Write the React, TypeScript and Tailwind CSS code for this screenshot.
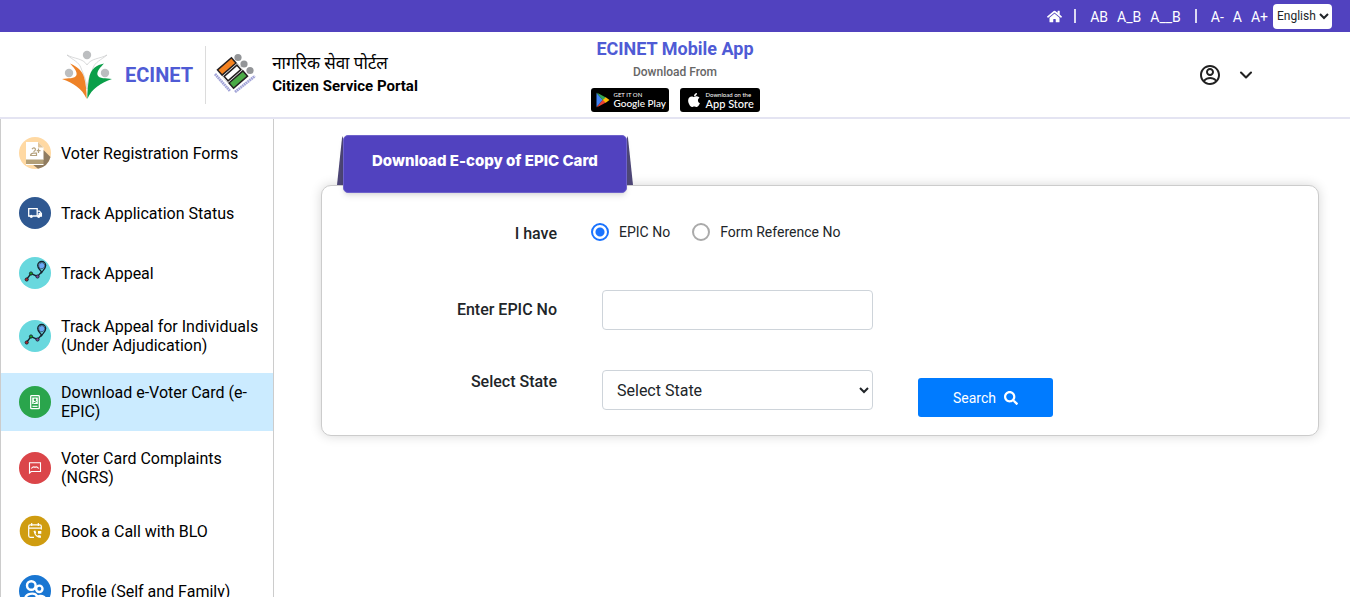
import React, { useState } from "react";
import { FaApple, FaHome, FaSearch } from "react-icons/fa";
import { RiAccountCircleLine } from "react-icons/ri";
import { ChevronDown } from "lucide-react";

function EcinetLogo() {
  return (
    <svg width="52" height="52" viewBox="0 0 52 52" aria-hidden="true">
      <circle cx="26" cy="6" r="4.200" fill="#bcbec0" />
      <circle cx="8" cy="24" r="4.200" fill="#bcbec0" />
      <circle cx="44" cy="24" r="4.200" fill="#bcbec0" />
      <path
        d="M6 6C13 10 22 9 26 16C30 9 39 10 46 6C40 11 34 13 32 19C30 25 27 29 26 40C25 29 22 25 20 19C18 13 12 11 6 6Z"
        fill="#fff"
        stroke="#c9cacc"
        strokeWidth="0.7"
      />
      <path d="M1 30C7 29 14 30 15.500 26C16.500 22 12 18 9 14.500C17 18 21 22 23 28C25 35 25.600 42 25.700 50C21 39 12 34 1 30Z" fill="#ee8227" />
      <path d="M51 30C45 29 38 30 36.500 26C35.500 22 40 18 43 14.500C36 16 29.500 19 28 30C26.800 37 26.300 43 26.300 50C31 39 40 34 51 30Z" fill="#0a9f49" />
    </svg>
  );
}

function VoterLogo() {
  return (
    <svg width="44" height="44" viewBox="0 0 44 44" aria-hidden="true">
      <g fill="#939598">
        <circle cx="25" cy="4.500" r="3.600" />
        <circle cx="31" cy="11" r="3.600" />
        <circle cx="37" cy="17.500" r="3.600" />
      </g>
      <g transform="translate(19.500 20) rotate(-41)">
        <rect x="-10" y="-13" width="20" height="26" fill="#231f20" />
        <rect x="-8.500" y="-11.500" width="17" height="5.500" fill="#f58220" />
        <rect x="-10" y="-4.500" width="20" height="9" fill="#fff" />
        <rect x="-8.500" y="-3" width="17" height="6" fill="#fff" stroke="#231f20" strokeWidth="1.500" />
        <rect x="-8.500" y="6" width="17" height="5.500" fill="#4aaa46" />
      </g>
      <g fill="none" stroke="#a3a5d8" strokeWidth="2.800" strokeDasharray="1.800 0.500">
        <path d="M2 21L17 38" />
        <path d="M22 39L42 23" />
      </g>
    </svg>
  );
}

function PlayLogo() {
  return (
    <svg width="14" height="16" viewBox="0 0 13 16" aria-hidden="true" className="shrink-0">
      <path d="M0 1L6.500 8L0 15Z" fill="#4285f4" />
      <path d="M0 0.500L9.500 5.500L6.500 8.500Z" fill="#34a853" />
      <path d="M0 15.500L9.500 10.500L6.500 7.500Z" fill="#ea4335" />
      <path d="M9.200 5.200L13 8L9.200 10.800L6.300 8Z" fill="#fbbc04" />
    </svg>
  );
}

function FormsIcon() {
  return (
    <svg width="32" height="32" viewBox="0 0 32 32" aria-hidden="true">
      <circle cx="16" cy="16" r="16" fill="#ffd9a3" />
      <path d="M24.500 13L31.500 20A16 16 0 0 1 19 31.700L13 27Z" fill="#8f7b60" />
      <path d="M7 5H19L24.500 10.500V23H7Z" fill="#fff" />
      <path d="M19 5L24.500 10.500H19Z" fill="#e0c59c" />
      <path d="M7 22.500H24.500V27.500H7Z" fill="#b39f77" />
      <path d="M7 27H24.500V28H7Z" fill="#fff" />
      <g fill="none" stroke="#b5a27e" strokeWidth="1.200">
        <path d="M13 12.200Q14.800 9.800 16.500 12Q16.500 14 14.500 14.800M11.500 18.500Q12 16.200 14.500 16.200H17.500V18.500H11M19.500 11.500V16M17.700 13.700H21.500" />
      </g>
    </svg>
  );
}

function TruckIcon() {
  return (
    <svg width="32" height="32" viewBox="0 0 32 32" aria-hidden="true">
      <circle cx="16" cy="16" r="16" fill="#2f5891" />
      <path
        d="M11 19H9.700V11.600H18.200V19H13.500M18.200 14.200H20.500L22.400 16.500V19H21"
        fill="none"
        stroke="#fff"
        strokeWidth="1.300"
      />
      <path d="M19.500 16H21.500L22.400 17.500V19H19.500Z" fill="#fff" />
      <circle cx="12.300" cy="19.300" r="1.600" fill="#fff" />
      <circle cx="19.700" cy="19.300" r="1.600" fill="#fff" />
    </svg>
  );
}

function RouteIcon() {
  return (
    <svg width="32" height="32" viewBox="0 0 32 32" aria-hidden="true">
      <circle cx="16" cy="16" r="16" fill="#68d8de" />
      <path d="M7.500 22.500L12 16.500L18.500 19.500L23 14.500" fill="none" stroke="#16222e" strokeWidth="1.400" />
      <path
        d="M22.700 15.500C21.500 12.500 18.700 11.500 18.700 8.500A4 4 0 0 1 26.700 8.500C26.700 11.500 24 13 22.700 15.500Z"
        fill="#68d8de"
        stroke="#16222e"
        strokeWidth="1.300"
      />
      <circle cx="22.700" cy="8.700" r="3" fill="#6aa9f5" stroke="#223" strokeWidth="0.900" strokeDasharray="1 0.500" />
      <circle cx="7.700" cy="22.500" r="1.600" fill="#b3262d" stroke="#16222e" strokeWidth="0.900" />
      <circle cx="12" cy="16.500" r="1.600" fill="#16a01d" stroke="#16222e" strokeWidth="0.900" />
      <circle cx="18.500" cy="19.500" r="1.600" fill="#7a4a9c" stroke="#16222e" strokeWidth="0.900" />
    </svg>
  );
}

function CardIcon() {
  return (
    <svg width="32" height="32" viewBox="0 0 32 32" aria-hidden="true">
      <circle cx="16" cy="16" r="16" fill="#2aa54c" />
      <rect x="11.700" y="9.700" width="8.600" height="13" rx="0.800" fill="none" stroke="#fff" strokeWidth="1.300" />
      <path d="M13.200 11.500H18.800V18H13.200Z" fill="#fff" />
      <circle cx="16" cy="13.700" r="1.200" fill="#2aa54c" />
      <path d="M14.300 17L17.700 15.500" stroke="#2aa54c" strokeWidth="1" />
      <path d="M13.500 20.300H18.500" stroke="#fff" strokeWidth="1.200" />
    </svg>
  );
}

function ComplaintIcon() {
  return (
    <svg width="32" height="32" viewBox="0 0 32 32" aria-hidden="true">
      <circle cx="16" cy="16" r="16" fill="#db4549" />
      <path d="M10.500 21V10.700H21.500V19.500H12.200Z" fill="none" stroke="#fff" strokeWidth="1.100" />
      <path d="M12.300 16.500C13.500 15 15 14.500 16 15.300C17 14.500 18.500 15 19.700 16.500" fill="none" stroke="#fff" strokeWidth="1.100" />
    </svg>
  );
}

function CallIcon() {
  return (
    <svg width="32" height="32" viewBox="0 0 32 32" aria-hidden="true">
      <circle cx="16" cy="16" r="15.300" fill="#cf9c10" />
      <path
        d="M15 22.300H11.200Q9.700 22.300 9.700 20.800V11.300Q9.700 9.800 11.200 9.800H20.800Q22.300 9.800 22.300 11.300V14.500M9.700 13.200H22.300M12.700 8V11M19.300 8V11"
        fill="none"
        stroke="#fff"
        strokeWidth="1.200"
      />
      <path d="M14.500 16L16.300 15.600L17.200 17.800L16.500 18.700Q17.300 20 18.700 20.700L19.800 20L22 20.800L21.700 23Q16 23 14.500 16Z" fill="#fff" />
      <rect x="19" y="16" width="3.300" height="2.800" fill="#fff" />
    </svg>
  );
}

function ProfileIcon() {
  return (
    <svg width="32" height="32" viewBox="0 0 32 32" aria-hidden="true">
      <circle cx="16" cy="16" r="16" fill="#1976d2" />
      <g fill="none" stroke="#fff" strokeWidth="2.400">
        <circle cx="12.300" cy="10.500" r="4.300" />
        <circle cx="20.300" cy="13.800" r="3.200" />
        <path d="M6 25C6 17.500 16 17.500 18 21M15.500 26C16 20 26 19 26.500 25" />
      </g>
    </svg>
  );
}

const MENU = [
  { label: "Voter Registration Forms", icon: <FormsIcon /> },
  { label: "Track Application Status", icon: <TruckIcon /> },
  { label: "Track Appeal", icon: <RouteIcon /> },
  { label: "Track Appeal for Individuals (Under Adjudication)", icon: <RouteIcon /> },
  { label: "Download e-Voter Card (e-EPIC)", icon: <CardIcon />, active: true },
  { label: "Voter Card Complaints (NGRS)", icon: <ComplaintIcon /> },
  { label: "Book a Call with BLO", icon: <CallIcon /> },
  { label: "Profile (Self and Family)", icon: <ProfileIcon /> },
];

function TopBar() {
  return (
    <div className="flex h-8 shrink-0 items-center justify-end bg-[#5142bf] pr-[18px] text-sm text-white">
      <a href="#home" aria-label="Home">
        <FaHome size={15} />
      </a>
      <span className="ml-3 h-3.5 w-0.5 bg-white/80" />
      <div className="ml-3.5 flex gap-[9px] pt-0.5">
        <button type="button">AB</button>
        <button type="button">A_B</button>
        <button type="button">A__B</button>
      </div>
      <span className="ml-3.5 h-3.5 w-0.5 bg-white/80" />
      <div className="ml-3.5 flex gap-[9px] pt-0.5">
        <button type="button">A-</button>
        <button type="button">A</button>
        <button type="button">A+</button>
      </div>
      <select
        aria-label="Language"
        defaultValue="English"
        className="ml-[5px] h-[25px] w-[59px] rounded bg-white text-xs text-[#212529]"
      >
        <option>English</option>
      </select>
    </div>
  );
}

function Header() {
  return (
    <header className="grid shrink-0 grid-cols-[1fr_auto_1fr] border-b-2 border-[#e4e4f2] bg-white">
      <div className="flex h-[85px] items-center pl-[61px]">
        <EcinetLogo />
        <span className="ml-3 text-xl font-bold text-[#4f5bd5]">ECINET</span>
        <span className="ml-3 h-[58px] w-px bg-[#dcdcdc]" />
        <div className="ml-[7px]">
          <VoterLogo />
        </div>
        <div className="ml-[15px] leading-[23px] text-black">
          <div className="text-[17px]">नागरिक सेवा पोर्टल</div>
          <div className="text-[15px] font-bold">Citizen Service Portal</div>
        </div>
      </div>

      <div className="flex flex-col items-center pt-[5px]">
        <h1 className="text-lg leading-6 font-bold text-[#4f5bd5]">ECINET Mobile App</h1>
        <p className="text-xs leading-[22px] font-medium text-[#666]">Download From</p>
        <div className="mt-[5px] flex gap-[11px]">
          <a href="#play" className="flex h-6 w-[78px] items-center gap-1 rounded-[3px] bg-black pl-[5px] text-white">
            <PlayLogo />
            <span className="flex flex-col font-[Lato] whitespace-nowrap">
              <span className="text-[6px] leading-[7px]">GET IT ON</span>
              <span className="text-[10px] leading-[11px] font-medium">Google Play</span>
            </span>
          </a>
          <a href="#store" className="flex h-6 w-20 items-center gap-1 rounded-[3px] bg-black pl-[6px] text-white">
            <FaApple size={16} />
            <span className="flex flex-col font-[Lato] whitespace-nowrap">
              <span className="text-[6px] leading-[7px]">Download on the</span>
              <span className="text-[11px] leading-[11px] font-medium">App Store</span>
            </span>
          </a>
        </div>
      </div>

      <button type="button" aria-label="Account" className="flex h-[85px] items-center gap-3.5 justify-self-end pr-[94px] text-[#212121]">
        <RiAccountCircleLine size={24} />
        <ChevronDown size={20} strokeWidth={2.5} />
      </button>
    </header>
  );
}

function Sidebar() {
  return (
    <nav className="flex w-[274px] shrink-0 flex-col gap-2 overflow-hidden border-x border-[#ccc] pt-2">
      {MENU.map((item) => (
        <a
          key={item.label}
          href="#menu"
          className={
            item.active
              ? "flex shrink-0 items-center gap-2.5 bg-[#cbebff] py-2.5 pr-3 pl-[18px] leading-[19px] text-black"
              : "flex shrink-0 items-center gap-2.5 py-2.5 pr-3 pl-[18px] leading-[19px] text-black"
          }
        >
          <span className="shrink-0">{item.icon}</span>
          <span>{item.label}</span>
        </a>
      ))}
    </nav>
  );
}

const radioClass =
  "size-[18px] appearance-none rounded-full border-2 border-[#aaa] bg-white checked:border-[#1a73ff] checked:bg-[radial-gradient(circle,#1a73ff_4px,#fff_5px)]";

function EpicForm() {
  const [mode, setMode] = useState("epic");

  return (
    <section className="pt-4 pr-[31px] pl-[47px]">
      <div className="relative z-10 -mb-2 ml-4 flex w-fit items-start">
        <svg width="6" height="50" viewBox="0 0 6 50" aria-hidden="true">
          <path d="M6 1V50H0L5 3Z" fill="#4d4676" />
        </svg>
        <h2 className="h-[58px] rounded-[5px] border border-[#6e62cb] bg-[#5142bf] px-7 font-[Inter] text-[15px] leading-[50px] font-extrabold text-white shadow-md">
          Download E-copy of EPIC Card
        </h2>
        <svg width="6" height="50" viewBox="0 0 6 50" aria-hidden="true">
          <path d="M0 1V50H6L1 3Z" fill="#4d4676" />
        </svg>
      </div>

      <form
        className="rounded-[10px] border border-[#ccc] bg-white pt-8 pb-[18px] text-[#212529] shadow-[0_0_12px_rgba(0,0,0,0.16)]"
        onSubmit={(e) => e.preventDefault()}
      >
        <div className="grid grid-cols-[235fr_271fr_135fr_220fr] items-start gap-x-[45px] gap-y-10">
          <div className="flex h-8 items-center justify-end font-medium">I have</div>
          <div className="col-span-3 -ml-[11px] flex h-7 items-center gap-[22px] text-sm" role="radiogroup" aria-label="I have">
            <label className="flex items-center gap-2.5">
              <input type="radio" name="mode" className={radioClass} checked={mode === "epic"} onChange={() => setMode("epic")} />
              EPIC No
            </label>
            <label className="flex items-center gap-2.5">
              <input type="radio" name="mode" className={radioClass} checked={mode === "form"} onChange={() => setMode("form")} />
              Form Reference No
            </label>
          </div>

          <label htmlFor="epic" className="text-right leading-10 font-medium">
            Enter EPIC No
          </label>
          <input id="epic" type="text" className="h-10 w-full rounded border border-[#ced4da] px-3 outline-none" />
          <div className="col-span-2" />

          <label htmlFor="state" className="text-right font-medium">
            Select State
          </label>
          <select id="state" defaultValue="" className="h-10 w-full rounded border border-[#ced4da] bg-white px-2.5 text-[#212529]">
            <option value="">Select State</option>
          </select>
          <button type="submit" className="mt-2 flex h-[39px] items-center justify-center gap-2 rounded-[3px] bg-[#007bff] text-sm text-white">
            Search
            <FaSearch size={14} />
          </button>
        </div>
      </form>
    </section>
  );
}

export default function App() {
  return (
    <div className="flex h-screen flex-col overflow-hidden bg-white font-[Roboto,'Noto_Sans',sans-serif]">
      <TopBar />
      <Header />
      <div className="flex min-h-0 flex-1">
        <Sidebar />
        <main className="min-w-0 flex-1">
          <EpicForm />
        </main>
      </div>
    </div>
  );
}
